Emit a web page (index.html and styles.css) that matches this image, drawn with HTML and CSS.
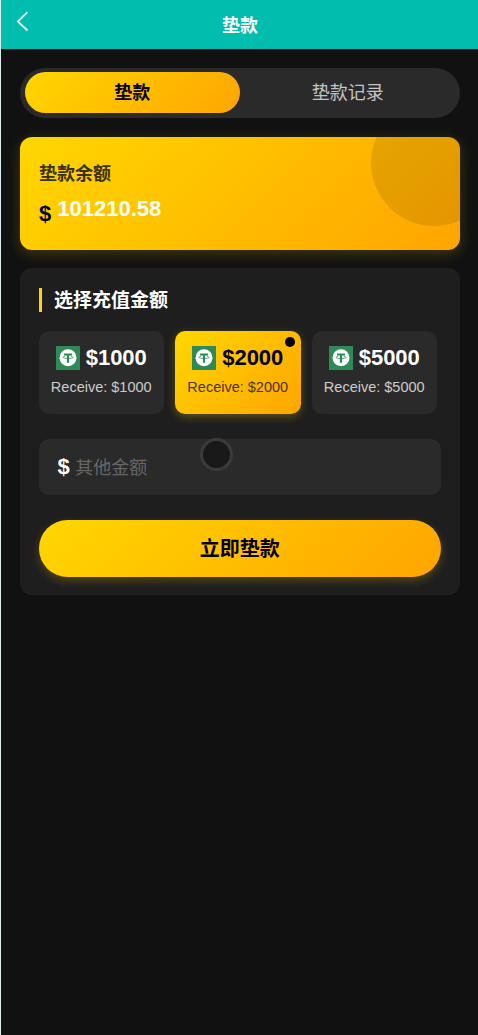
FILE: index.html
```html
<!DOCTYPE html>
<html lang="zh-CN">
<head>
<meta charset="UTF-8">
<title>垫款</title>
<link rel="stylesheet" href="styles.css">
</head>
<body>
<svg class="defs" width="0" height="0" aria-hidden="true">
  <symbol id="usdt" viewBox="0 0 24 24">
    <rect width="24" height="24" fill="#2e8b57"/>
    <circle cx="12" cy="11.7" r="8.5" fill="#fff"/>
    <path d="M8 7.4h8v2.2h-2.9v7.2h-2.2V9.6H8z" fill="#2e8b57"/>
    <path d="M9.2 10.3C5.8 10.8 6 12.4 12 12.5s6.200-1.700 2.800-2.200" fill="none" stroke="#2e8b57" stroke-width=".8"/>
  </symbol>
</svg>
<header class="header">
  <svg class="back" viewBox="0 0 14 22"><path d="M12.500 2.200 2.800 11.500 12.500 20.500"/></svg>
  <h1 class="header-title">垫款</h1>
</header>
<main class="content">
  <nav class="tabs">
    <div class="tab tab-active">垫款</div>
    <div class="tab">垫款记录</div>
  </nav>
  <section class="balance">
    <div class="balance-label">垫款余额</div>
    <div class="balance-row"><span class="balance-sign">$</span><span class="balance-value">101210.58</span></div>
  </section>
  <section class="panel">
    <h2 class="panel-title">选择充值金额</h2>
    <div class="options">
      <div class="option">
        <div class="amount"><svg class="coin"><use href="#usdt"/></svg>$1000</div>
        <div class="receive">Receive: $1000</div>
      </div>
      <div class="option option-active">
        <div class="amount"><svg class="coin"><use href="#usdt"/></svg>$2000</div>
        <div class="receive">Receive: $2000</div>
      </div>
      <div class="option">
        <div class="amount"><svg class="coin"><use href="#usdt"/></svg>$5000</div>
        <div class="receive">Receive: $5000</div>
      </div>
    </div>
    <div class="field">
      <span class="field-sign">$</span><span class="placeholder">其他金额</span>
      <span class="touch"></span>
    </div>
    <div class="submit">立即垫款</div>
  </section>
</main>
</body>
</html>
```
FILE: styles.css
```css
* { box-sizing: border-box; }
body {
  margin: 0;
  min-height: 1035px;
  border-left: 1px solid #dcecea;
  background: #111;
  color: #fff;
  font-family: "Liberation Sans", "Noto Sans CJK SC", sans-serif;
}
.defs { position: absolute; }
.header {
  position: relative;
  height: 49px;
  background: #00bdad;
  display: flex;
  align-items: center;
  justify-content: center;
}
.header-title { margin: 0; padding: 2px 0 0 1px; font-size: 18px; line-height: 26px; }
.back {
  position: absolute;
  left: 14px;
  top: 10px;
  width: 14px;
  height: 22px;
  fill: none;
  stroke: #e8fffb;
  stroke-width: 1.8;
}
.content { padding: 19px 18px 0 19px; }
.tabs {
  display: flex;
  height: 50px;
  padding: 4px 4.5px 5px;
  border-radius: 25px;
  background: #2a2a2a;
}
.tab {
  flex: 1;
  display: flex;
  align-items: center;
  justify-content: center;
  padding-bottom: 4px;
  border-radius: 21px;
  font-size: 18px;
  color: #c4c4c4;
}
.tab-active {
  background: linear-gradient(135deg, #ffd700, #ffa500);
  color: #000;
  font-weight: 700;
}
.balance {
  position: relative;
  overflow: hidden;
  height: 113px;
  margin-top: 19px;
  padding: 24px 19px;
  border-radius: 12px;
  background: linear-gradient(135deg, #ffd700, #ffa500);
  box-shadow: 0 4px 14px rgba(255, 215, 0, .2);
}
.balance::after {
  content: "";
  position: absolute;
  right: -37px;
  top: -37px;
  width: 126px;
  height: 126px;
  border-radius: 50%;
  background: rgba(0, 0, 0, .1);
}
.balance-label { font-size: 18px; line-height: 26px; font-weight: 700; color: #3b3000; }
.balance-row { display: flex; gap: 6px; padding-top: 9px; font-size: 22px; font-weight: 700; line-height: 25px; }
.balance-sign { color: #000; padding-top: 5px; }
.panel {
  height: 327px;
  margin-top: 18px;
  padding: 20px 19px 18px 18.5px;
  border-radius: 12px;
  background: #1e1e1e;
}
.panel-title {
  height: 24px;
  margin: 0;
  padding-left: 12.5px;
  border-left: 3px solid #ffd700;
  font-size: 19px;
  line-height: 25px;
}
.options { display: grid; grid-template-columns: repeat(3, 125.5px); gap: 11px; margin-top: 19px; }
.option {
  position: relative;
  height: 83px;
  padding-top: 14px;
  border-radius: 10px;
  background: #2a2a2a;
  text-align: center;
}
.amount { display: flex; align-items: center; justify-content: center; gap: 6px; height: 25px; font-size: 22px; font-weight: 700; }
.coin { width: 24px; height: 24px; margin-top: 1px; }
.receive { margin-top: 9px; font-size: 14.5px; line-height: 17px; color: #ccc; }
.option-active {
  background: linear-gradient(135deg, #ffd700, #ffa500);
  box-shadow: 0 3px 8px rgba(255, 215, 0, .28);
  color: #000;
}
.option-active .receive { color: #4c3500; }
.option-active::after {
  content: "";
  position: absolute;
  right: 6px;
  top: 6px;
  width: 10px;
  height: 10px;
  border-radius: 50%;
  background: #000;
}
.field {
  position: relative;
  display: flex;
  align-items: center;
  gap: 5.5px;
  height: 56px;
  margin: 25px 0 0;
  padding-left: 19px;
  border-radius: 10px;
  background: #2a2a2a;
}
.field-sign { font-size: 22px; font-weight: 700; }
.placeholder { padding-bottom: 2px; font-size: 18px; color: #666; }
.touch {
  position: absolute;
  left: 161px;
  top: -1px;
  width: 33px;
  height: 33px;
  border: 3px solid #3b3b3b;
  border-radius: 50%;
  background: #191919;
}
.submit {
  display: flex;
  align-items: center;
  justify-content: center;
  height: 57px;
  margin-top: 24.5px;
  padding-bottom: 2px;
  border-radius: 29px;
  background: linear-gradient(135deg, #ffd700, #ffa500);
  box-shadow: 0 4px 10px rgba(255, 215, 0, .22);
  color: #000;
  font-size: 20px;
  font-weight: 700;
}
```
